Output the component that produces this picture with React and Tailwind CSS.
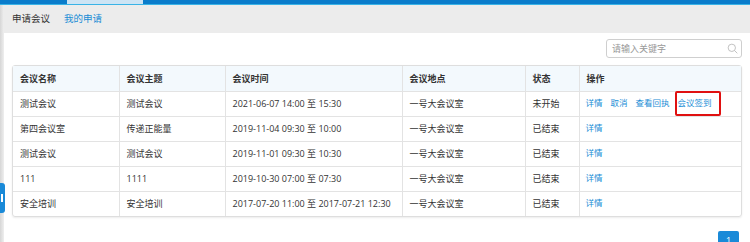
import React from 'react';

const rows = [
  { name: '测试会议', topic: '测试会议', time: '2021-06-07 14:00 至 15:30', place: '一号大会议室', status: '未开始', full: true },
  { name: '第四会议室', topic: '传递正能量', time: '2019-11-04 09:30 至 10:00', place: '一号大会议室', status: '已结束' },
  { name: '测试会议', topic: '测试会议', time: '2019-11-01 09:30 至 10:30', place: '一号大会议室', status: '已结束' },
  { name: '111', topic: '1111', time: '2019-10-30 07:00 至 07:30', place: '一号大会议室', status: '已结束' },
  { name: '安全培训', topic: '安全培训', time: '2017-07-20 11:00 至 2017-07-21 12:30', place: '一号大会议室', status: '已结束' },
];

const font = { fontFamily: '"Open Sans", "Noto Sans CJK SC", sans-serif' };

const App = () => {
  return (
    <div className="relative w-[750px] h-[242px] overflow-hidden bg-white text-[9px] text-[#333]" style={font}>
      {/* 상단 파란 바 */}
      <div className="flex h-[5px] bg-[#0a7ccb] border-b border-[#39b3e6]">
        <div className="ml-[67px] w-[76px] bg-[#cde4f4]" />
      </div>

      {/* 탭 */}
      <div className="flex items-center h-[28px] bg-[#ececec] pl-[12px] gap-[14px] text-[9.5px]">
        <span className="text-[#333]">申请会议</span>
        <span className="text-[#1a8dd6]">我的申请</span>
      </div>

      <div className="absolute left-0 top-[5px] bottom-0 w-[4px] bg-gradient-to-r from-[#d6d6d6] to-[#efefef]" />
      <div className="absolute left-0 top-[183px] w-[5px] h-[30px] rounded-r-[3px] bg-[#1a8ad8] flex items-center">
        <div className="w-[2px] h-[8px] bg-white ml-[1px]" />
      </div>

      <div className="pl-[12px] pr-[8px]">
        <div className="flex justify-end pt-[6px] pb-[7px]">
          <div className="flex items-center w-[136px] h-[19px] border border-[#cfcfcf] rounded-[3px] pl-[5px] pr-[3px]">
            <span className="flex-1 text-[#999]">请输入关键字</span>
            <svg width="11" height="11" viewBox="0 0 24 24" fill="none" stroke="#b5b5b5" strokeWidth="1.8">
              <circle cx="10.5" cy="10.5" r="8" />
              <path d="M16.5 16.5l6 6" />
            </svg>
          </div>
        </div>

        <div className="w-[730px] border border-[#dedede] rounded-[3px] shadow-[0_1px_2px_rgba(0,0,0,0.08)]">
          <table className="w-full border-collapse table-fixed">
            <colgroup>
              <col className="w-[106px]" />
              <col className="w-[106px]" />
              <col className="w-[177px]" />
              <col className="w-[123px]" />
              <col className="w-[54px]" />
              <col />
            </colgroup>
            <thead>
              <tr className="h-[25px] bg-[#f3f9fd]">
                {['会议名称', '会议主题', '会议时间', '会议地点', '状态', '操作'].map((h, i) => (
                  <th key={h} className={`text-left font-semibold px-[7px] ${i > 0 ? 'border-l border-[#e3e3e3]' : ''}`}>{h}</th>
                ))}
              </tr>
            </thead>
            <tbody>
              {rows.map((r, idx) => (
                <tr key={idx} className="h-[25px] border-t border-[#e3e3e3]">
                  <td className="px-[7px]">{r.name}</td>
                  <td className="px-[7px] border-l border-[#e3e3e3]">{r.topic}</td>
                  <td className="px-[7px] border-l border-[#e3e3e3] whitespace-nowrap">{r.time}</td>
                  <td className="px-[7px] border-l border-[#e3e3e3]">{r.place}</td>
                  <td className="px-[7px] border-l border-[#e3e3e3]">{r.status}</td>
                  <td className="pl-[6px] pr-[7px] border-l border-[#e3e3e3] text-[#1a8dd6] text-[8.5px]">
                    {r.full ? (
                      <div className="flex items-center gap-[8px]">
                        <span>详情</span>
                        <span>取消</span>
                        <span>查看回执</span>
                        <span className="relative">
                          会议签到
                          <span className="absolute left-[-3px] right-[-9px] top-[-6px] bottom-[-6px] border-2 border-[#e01010] rounded-[2px]" />
                        </span>
                      </div>
                    ) : (
                      <span>详情</span>
                    )}
                  </td>
                </tr>
              ))}
            </tbody>
          </table>
        </div>

        <div className="flex justify-end pt-[14px] pr-[3px]">
          <div className="w-[21px] h-[20px] rounded-[2px] bg-[#1a8ad8] text-white flex items-center justify-center">1</div>
        </div>
      </div>
    </div>
  );
};

export default App;
